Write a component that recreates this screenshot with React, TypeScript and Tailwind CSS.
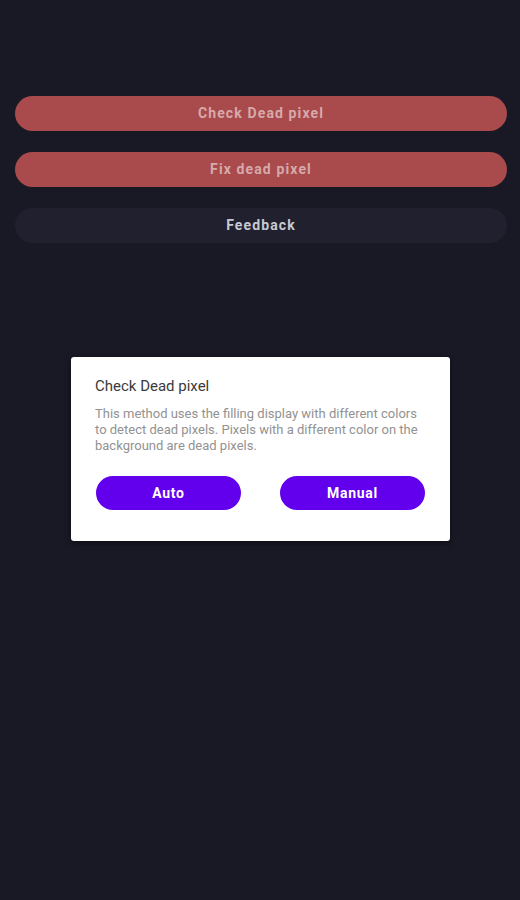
export default function App() {
  return (
    <div
      className="w-[520px] h-[900px] bg-[#191926] flex flex-col relative"
      style={{ fontFamily: 'Roboto, "Noto Sans", sans-serif' }}
    >
      <div className="flex flex-col gap-[21px] pl-[15px] pr-[13px] pt-[96px]">
        <div className="h-[35px] rounded-full bg-[#a94a4c] flex items-center justify-center text-[14px] font-bold tracking-[0.08em] text-[#d7a9aa]">
          Check Dead pixel
        </div>
        <div className="h-[35px] rounded-full bg-[#a94a4c] flex items-center justify-center text-[14px] font-bold tracking-[0.08em] text-[#d7a9aa]">
          Fix dead pixel
        </div>
        <div className="h-[35px] rounded-full bg-[#20202f] flex items-center justify-center text-[14px] font-bold tracking-[0.08em] text-[#c9c9d2]">
          Feedback
        </div>
      </div>

      <div className="flex justify-center pt-[114px]">
        <div className="w-[379px] ml-[1px] bg-white rounded-[3px] shadow-[0_2px_6px_rgba(0,0,0,0.5)] px-[24px] pt-[20px] pb-[31px]">
          <div className="text-[15px] leading-[18px] text-[#3a3a3a]">Check Dead pixel</div>
          <div className="mt-[11px] text-[13px] leading-[16px] text-[#929292]">
            This method uses the filling display with different colors to detect dead pixels. Pixels with a different color on the background are dead pixels.
          </div>
          <div className="mt-[22px] flex gap-[39px] pl-[1px]">
            <div className="w-[145px] h-[34px] rounded-full bg-[#6200ee] flex items-center justify-center text-white text-[14px] font-bold tracking-[0.05em]">
              Auto
            </div>
            <div className="w-[145px] h-[34px] rounded-full bg-[#6200ee] flex items-center justify-center text-white text-[14px] font-bold tracking-[0.05em]">
              Manual
            </div>
          </div>
        </div>
      </div>
    </div>
  );
}
